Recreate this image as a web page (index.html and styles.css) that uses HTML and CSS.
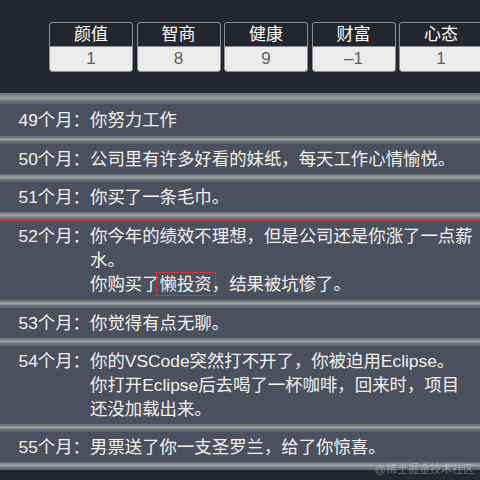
FILE: index.html
```html
<!DOCTYPE html>
<html lang="zh-CN">

<head>
  <meta charset="UTF-8">
  <meta name="viewport" content="width=device-width, initial-scale=1.0">
  <title>人生模拟</title>
  <link rel="stylesheet" href="styles.css">
</head>

<body>
  <div class="stats">
    <div class="stat">
      <div class="stat-name">颜值</div>
      <div class="stat-val">1</div>
    </div>
    <div class="stat">
      <div class="stat-name">智商</div>
      <div class="stat-val">8</div>
    </div>
    <div class="stat">
      <div class="stat-name">健康</div>
      <div class="stat-val">9</div>
    </div>
    <div class="stat">
      <div class="stat-name">财富</div>
      <div class="stat-val">–1</div>
    </div>
    <div class="stat">
      <div class="stat-name">心态</div>
      <div class="stat-val">1</div>
    </div>
  </div>

  <ul class="log">
    <li class="log-item">
      <div class="log-body"><span class="log-age">49个月：</span>
        <div class="log-text">你努力工作</div>
      </div>
    </li>
    <li class="log-item">
      <div class="log-body"><span class="log-age">50个月：</span>
        <div class="log-text">公司里有许多好看的妹纸，每天工作心情愉悦。</div>
      </div>
    </li>
    <li class="log-item">
      <div class="log-body"><span class="log-age">51个月：</span>
        <div class="log-text">你买了一条毛巾。</div>
      </div>
    </li>
    <li class="log-item">
      <div class="log-body hit"><span class="log-age">52个月：</span>
        <div class="log-text">你今年的绩效不理想，但是公司还是你涨了一点薪水。<br>你购买了<span class="tag">懒投资</span>，结果被坑惨了。</div>
      </div>
    </li>
    <li class="log-item">
      <div class="log-body"><span class="log-age">53个月：</span>
        <div class="log-text">你觉得有点无聊。</div>
      </div>
    </li>
    <li class="log-item">
      <div class="log-body"><span class="log-age">54个月：</span>
        <div class="log-text">你的VSCode突然打不开了，你被迫用Eclipse。<br>你打开Eclipse后去喝了一杯咖啡，回来时，项目还没加载出来。</div>
      </div>
    </li>
    <li class="log-item">
      <div class="log-body"><span class="log-age">55个月：</span>
        <div class="log-text">男票送了你一支圣罗兰，给了你惊喜。</div>
      </div>
    </li>
  </ul>

  <div class="mark">@稀土掘金技术社区</div>
</body>

</html>
```

FILE: styles.css
```css
* {
  padding: 0;
  margin: 0;
  box-sizing: border-box;
}

body {
  background-color: #23262e;
  color: #f2f2f2;
  font-family: "Liberation Sans", "Noto Sans CJK SC", sans-serif;
  overflow: hidden;
  position: relative;
  height: 480px;
}

/* 顶部属性 */
.stats {
  display: flex;
  gap: 3.5px;
  padding-left: 49px;
  margin-top: 22px;
  overflow: hidden;
}

.stat {
  flex: 0 0 84px;
  border: 1px solid #8c8f96;
  border-radius: 3px;
  overflow: hidden;
  text-align: center;
  font-size: 17px;
}

.stat-name {
  height: 24px;
  line-height: 23px;
  color: #fff;
  border-bottom: 1px solid #8c8f96;
}

.stat-val {
  height: 24px;
  line-height: 24px;
  background-color: #ececec;
  color: #5e5e5e;
}

/* 经历列表 */
.log {
  list-style: none;
  margin-top: 21px;
  font-size: 17.4px;
  line-height: 24px;
}

.log-item {
  padding-top: 8px;
  background: linear-gradient(#656971 0, #8d9095 30%, #a2a4a8 45%, #74787f 65%, #5a5e66 100%) top / 100% 8px no-repeat, #4a505d;
}

.log-item:first-child {
  padding-top: 11px;
  background-size: 100% 11px, auto;
}

.log-item:first-child .log-body {
  padding: 4px 4px 4px 17px;
}

.log::after {
  content: "";
  display: block;
  height: 8px;
  background: linear-gradient(#656971 0, #8d9095 30%, #a2a4a8 45%, #74787f 65%, #5a5e66 100%);
}

.log-body {
  display: flex;
  padding: 3px 4px 3px 17px;
}

.log-body.hit {
  border-top: 1px solid #c8393b;
  border-bottom: 1px solid #c8393b;
}

.log-age {
  flex: 0 0 73px;
  text-align: right;
  white-space: nowrap;
}

.log-text {
  flex: 1;
}

.tag {
  border: 1px solid #d0393b;
  padding: 1px 3px;
  margin: 0 -4px;
}

.mark {
  position: absolute;
  right: 6px;
  top: 462px;
  font-size: 11px;
  line-height: 14px;
  color: rgba(255, 255, 255, 0.35);
}
```
